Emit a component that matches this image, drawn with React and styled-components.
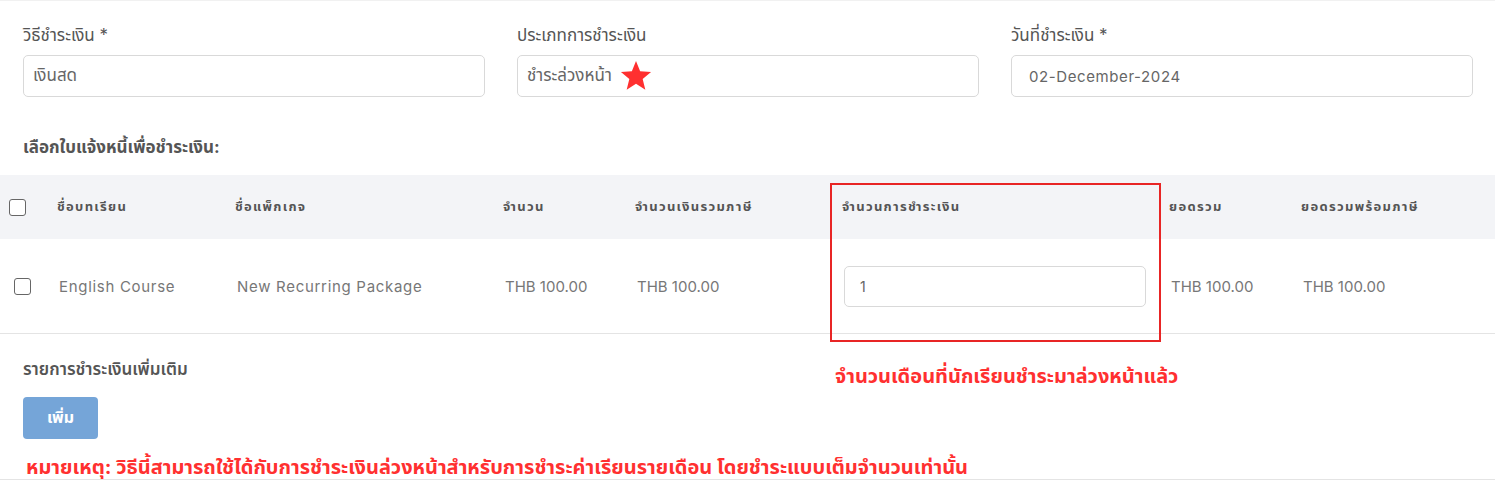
import React from 'react'
import styled, { createGlobalStyle } from "styled-components";

const GlobalStyle = createGlobalStyle`
  body {
    margin: 0;
    background: #fff;
    font-family: "Inter", "Noto Sans", "Noto Sans Thai", sans-serif;
  }
`;

const columns = "47px 178px 268px 132px 207px 327px 132px 1fr";

const App = () => {
    return (
        <>
            <GlobalStyle />
            <Page>
                <FieldRow>
                    <Field>
                        <Label>วิธีชำระเงิน *</Label>
                        <Input>เงินสด</Input>
                    </Field>
                    <Field>
                        <Label>ประเภทการชำระเงิน</Label>
                        <Input>
                            ชำระล่วงหน้า
                            <Star viewBox="0 0 24 24">
                                <path d="M12 1.5l3.1 7.6 8.2.6-6.3 5.3 2 8-7-4.4-7 4.4 2-8L.7 9.7l8.2-.6z" />
                            </Star>
                        </Input>
                    </Field>
                    <Field>
                        <Label>วันที่ชำระเงิน *</Label>
                        <Input $pad={17} $latin>02-December-2024</Input>
                    </Field>
                </FieldRow>

                <SectionTitle>เลือกใบแจ้งหนี้เพื่อชำระเงิน:</SectionTitle>

                <Table>
                    <HeadRow>
                        <CheckCell $pad={9}><CheckBox /></CheckCell>
                        <HeadCell>ชื่อบทเรียน</HeadCell>
                        <HeadCell>ชื่อแพ็กเกจ</HeadCell>
                        <HeadCell>จำนวน</HeadCell>
                        <HeadCell>จำนวนเงินรวมภาษี</HeadCell>
                        <HeadCell>จำนวนการชำระเงิน</HeadCell>
                        <HeadCell>ยอดรวม</HeadCell>
                        <HeadCell>ยอดรวมพร้อมภาษี</HeadCell>
                    </HeadRow>
                    <BodyRow>
                        <CheckCell $pad={14}><CheckBox /></CheckCell>
                        <BodyCell $wide>English Course</BodyCell>
                        <BodyCell $wide>New Recurring Package</BodyCell>
                        <BodyCell>THB 100.00</BodyCell>
                        <BodyCell>THB 100.00</BodyCell>
                        <BodyCell><CountInput>1</CountInput></BodyCell>
                        <BodyCell>THB 100.00</BodyCell>
                        <BodyCell>THB 100.00</BodyCell>
                    </BodyRow>
                    <Highlight />
                    <Callout>จำนวนเดือนที่นักเรียนชำระมาล่วงหน้าแล้ว</Callout>
                </Table>

                <Extra>
                    <SubTitle>รายการชำระเงินเพิ่มเติม</SubTitle>
                    <AddButton>เพิ่ม</AddButton>
                </Extra>

                <Note>หมายเหตุ: วิธีนี้สามารถใช้ได้กับการชำระเงินล่วงหน้าสำหรับการชำระค่าเรียนรายเดือน โดยชำระแบบเต็มจำนวนเท่านั้น</Note>
            </Page>
        </>
    )
}

export default App

const Page = styled.div`
  width: 1495px;
  height: 503px;
  overflow: hidden;
  border-top: solid 1px #f1f1f1;
  box-sizing: border-box;
`;

const FieldRow = styled.div`
  display: grid;
  grid-template-columns: repeat(3, 462px);
  column-gap: 32px;
  padding: 23px 22px 0 23px;
`;

const Field = styled.div`
  display: flex;
  flex-direction: column;
`;

const Label = styled.div`
  font-size: 17px;
  line-height: 22px;
  color: #555;
  margin-bottom: 9px;
`;

const Input = styled.div`
  height: 42px;
  box-sizing: border-box;
  border: solid 1px #d9d9d9;
  border-radius: 5px;
  display: flex;
  align-items: center;
  padding-left: ${(p) => p.$pad || 9}px;
  font-size: ${(p) => (p.$latin ? 15 : 17)}px;
  letter-spacing: ${(p) => (p.$latin ? 0.6 : 0)}px;
  color: #666;
`;

const Star = styled.svg`
  width: 32px;
  height: 32px;
  margin-left: 8px;
  margin-top: -3px;
  fill: #ff3030;
`;

const SectionTitle = styled.div`
  padding: 39px 23px 0;
  font-size: 17px;
  line-height: 22px;
  font-weight: 700;
  color: #555;
  height: 39px;
`;

const Table = styled.div`
  position: relative;
`;

const HeadRow = styled.div`
  display: grid;
  grid-template-columns: ${columns};
  height: 64px;
  background: #f3f4f7;
  align-items: center;
`;

const BodyRow = styled.div`
  display: grid;
  grid-template-columns: ${columns};
  height: 94px;
  align-items: center;
  border-bottom: solid 1px #e4e4e4;
`;

const CheckCell = styled.div`
  padding-left: ${(p) => p.$pad}px;
  display: flex;
  align-items: center;
`;

const CheckBox = styled.span`
  width: 17px;
  height: 17px;
  box-sizing: border-box;
  border: solid 1px #666;
  border-radius: 3px;
  background: #fff;
`;

const HeadCell = styled.div`
  padding-left: 10px;
  font-size: 13px;
  font-weight: 700;
  letter-spacing: 1.3px;
  color: #555;
`;

const BodyCell = styled.div`
  padding-left: 12px;
  font-size: 15px;
  letter-spacing: ${(p) => (p.$wide ? 0.7 : 0)}px;
  color: #777;
`;

const CountInput = styled.div`
  width: 302px;
  height: 41px;
  box-sizing: border-box;
  border: solid 1px #d9d9d9;
  border-radius: 5px;
  display: flex;
  align-items: center;
  padding-left: 15px;
  font-size: 14px;
  color: #666;
`;

const Highlight = styled.div`
  position: absolute;
  left: 830px;
  top: 8px;
  width: 331px;
  height: 159px;
  box-sizing: border-box;
  border: solid 2px #e82525;
  pointer-events: none;
`;

const Callout = styled.div`
  position: absolute;
  left: 835px;
  top: 187px;
  font-size: 20px;
  font-weight: 700;
  color: #ff3030;
`;

const Extra = styled.div`
  padding: 24px 23px 0;
  display: flex;
  flex-direction: column;
  align-items: flex-start;
`;

const SubTitle = styled.div`
  font-size: 17px;
  line-height: 22px;
  font-weight: 600;
  color: #555;
  margin-bottom: 17px;
`;

const AddButton = styled.button`
  width: 75px;
  height: 42px;
  border: none;
  border-radius: 4px;
  background: #75a5d8;
  color: #fff;
  font-family: inherit;
  font-size: 16px;
  font-weight: 700;
`;

const Note = styled.div`
  margin-top: 16px;
  padding: 0 26px;
  font-size: 20px;
  line-height: 24px;
  font-weight: 700;
  color: #ff3030;
  border-bottom: solid 1px #e4e4e4;
  height: 24px;
`;
